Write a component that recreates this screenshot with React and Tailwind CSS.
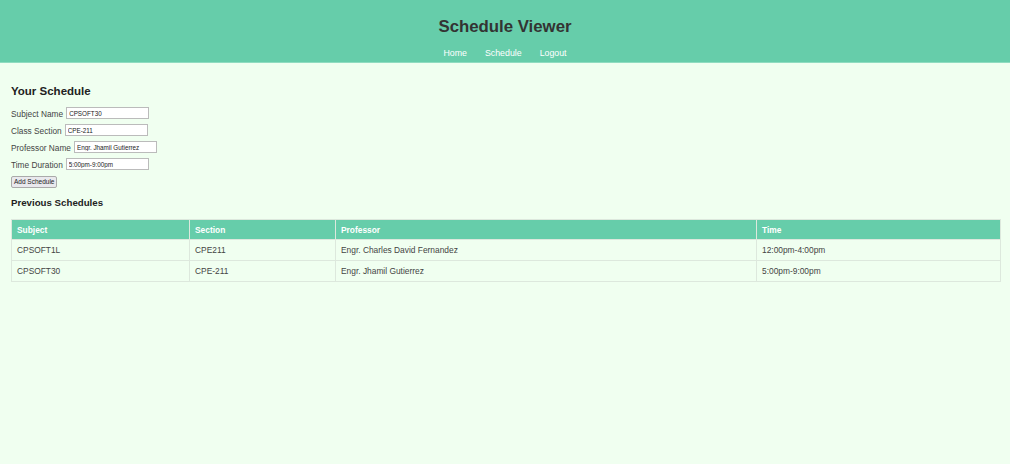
import React from 'react';

const rows = [
  { subject: 'CPSOFT1L', section: 'CPE211', professor: 'Engr. Charles David Fernandez', time: '12:00pm-4:00pm' },
  { subject: 'CPSOFT30', section: 'CPE-211', professor: 'Engr. Jhamil Gutierrez', time: '5:00pm-9:00pm' },
];

const fields = [
  { label: 'Subject Name', value: 'CPSOFT30' },
  { label: 'Class Section', value: 'CPE-211' },
  { label: 'Professor Name', value: 'Engr. Jhamil Gutierrez' },
  { label: 'Time Duration', value: '5:00pm-9:00pm' },
];

export default function App() {
  return (
    <div className="min-h-[464px] bg-[#f0fff0] text-[#333] font-['Liberation_Sans',Arial,sans-serif]">
      {/* 상단 헤더 */}
      <header className="h-[63px] bg-[#66cdaa] border-b border-[#8fdcc0] flex flex-col items-center">
        <h1 className="mt-[17px] text-[16.8px] leading-[20px] font-bold text-[#333]">Schedule Viewer</h1>
        <nav className="mt-[11px] flex gap-[18px] text-[8.8px] leading-[11px] text-white">
          <a>Home</a>
          <a>Schedule</a>
          <a>Logout</a>
        </nav>
      </header>

      <main className="px-[11px] pt-[21px]">
        <h2 className="text-[11.5px] leading-[14px] font-bold text-[#222]">Your Schedule</h2>

        <div className="mt-[9px] flex flex-col gap-[5px]">
          {fields.map((f) => (
            <div key={f.label} className="flex items-center gap-[3px] h-[12px]">
              <label className="text-[8.3px] leading-[10px] text-[#444] pt-[1px]">{f.label}</label>
              <input
                readOnly
                value={f.value}
                className="w-[83px] h-[12px] bg-white border border-[#bbb] px-[2px] text-[6.3px] leading-[10px] text-[#222] outline-none"
              />
            </div>
          ))}
          <div className="flex h-[12px] mt-[1px]">
            <button className="h-[12px] px-[2px] bg-[#e9e9ed] border border-[#aaa] rounded-[2px] text-[6.5px] leading-[10px] text-[#222]">
              Add Schedule
            </button>
          </div>
        </div>

        <h3 className="mt-[9px] text-[9.7px] leading-[12px] font-bold text-[#222]">Previous Schedules</h3>

        <table className="mt-[10px] w-[990px] border-collapse border border-[#dde8dd] text-[8.4px] leading-[10px]">
          <thead>
            <tr className="bg-[#66cdaa] text-white h-[20px]">
              <th className="w-[178px] text-left font-bold px-[5px] border border-[#dde8dd]">Subject</th>
              <th className="w-[146px] text-left font-bold px-[5px] border border-[#dde8dd]">Section</th>
              <th className="w-[421px] text-left font-bold px-[5px] border border-[#dde8dd]">Professor</th>
              <th className="text-left font-bold px-[5px] border border-[#dde8dd]">Time</th>
            </tr>
          </thead>
          <tbody>
            {rows.map((r) => (
              <tr key={r.subject} className="h-[21px] text-[#444]">
                <td className="px-[5px] border border-[#dde8dd]">{r.subject}</td>
                <td className="px-[5px] border border-[#dde8dd]">{r.section}</td>
                <td className="px-[5px] border border-[#dde8dd]">{r.professor}</td>
                <td className="px-[5px] border border-[#dde8dd]">{r.time}</td>
              </tr>
            ))}
          </tbody>
        </table>
      </main>
    </div>
  );
}
